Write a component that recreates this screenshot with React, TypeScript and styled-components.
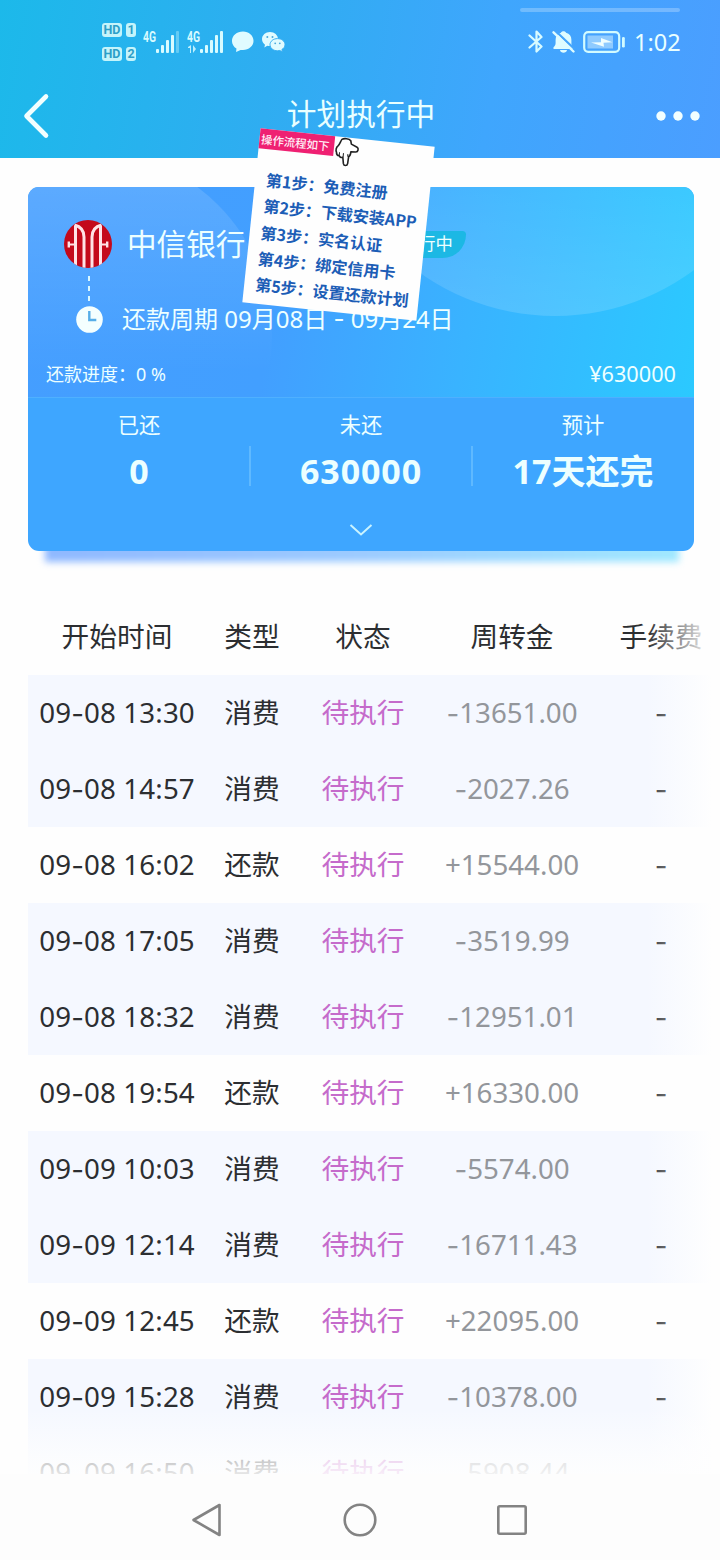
import React from 'react';
import styled, { createGlobalStyle } from 'styled-components';

const GlobalStyle = createGlobalStyle`
  * { box-sizing: border-box; }
  html, body { margin: 0; padding: 0; background: #fefefe; }
  body { font-family: "Noto Sans", "Noto Sans CJK SC", sans-serif; }
`;

const Screen = styled.div`
  position: relative;
  width: 720px;
  height: 1560px;
  overflow: hidden;
  display: flex;
  flex-direction: column;
  background: #fefefe;
`;

const TopArea = styled.header`
  height: 158px;
  flex: none;
  color: #e9ffff;
  background: linear-gradient(100deg, #1cb9ea 0%, #2fadf1 38%, #3fa6fd 68%, #4b9eff 100%);
`;

const StatusBar = styled.div`
  height: 74px;
  padding: 10px 40px 0 102px;
  display: flex;
  justify-content: space-between;
  align-items: center;
`;

const StatusGroup = styled.div<{ $gap: number }>`
  display: flex;
  align-items: center;
  gap: ${(p) => p.$gap}px;
  svg { display: block; }
`;

const SimStack = styled.div`
  display: flex;
  flex-direction: column;
  gap: 10px;
`;

const SimRow = styled.div`
  display: flex;
  gap: 4px;
`;

const SimTag = styled.span<{ $w: number }>`
  width: ${(p) => p.$w}px;
  height: 14px;
  border-radius: 3px;
  background: #c4f4fb;
  color: #2d9fc8;
  font: 700 12.5px/14px Roboto, sans-serif;
  text-align: center;
`;

const Clock = styled.span`
  width: 46px;
  font-size: 23.5px;
  line-height: 30px;
  white-space: nowrap;
`;

const Handle = styled.div`
  position: absolute;
  left: 520px;
  top: 8px;
  width: 160px;
  height: 4px;
  border-radius: 2px;
  background: rgba(255, 255, 255, 0.25);
`;

const TitleBar = styled.div`
  height: 84px;
  padding: 0 20px 0 22px;
  display: flex;
  align-items: center;
  justify-content: space-between;
  svg { display: block; }
`;

const Side = styled.div<{ $end?: boolean }>`
  width: 90px;
  display: flex;
  justify-content: ${(p) => (p.$end ? 'flex-end' : 'flex-start')};
`;

const Title = styled.h1`
  margin: -4px 0 0;
  font-size: 29.7px;
  font-weight: 400;
  line-height: 40px;
`;

const CardWrap = styled.section`
  position: relative;
  flex: none;
  margin: 29px 26px 0 28px;
  height: 364px;
  &::before {
    content: "";
    position: absolute;
    left: 17px;
    right: 15px;
    bottom: -11px;
    height: 30px;
    background: linear-gradient(90deg, #8fb8ff, #9ccbff 50%, #9fe8ff);
    filter: blur(3.5px);
  }
`;

const Card = styled.div`
  position: relative;
  height: 100%;
  border-radius: 11px;
  overflow: hidden;
  color: #edffff;
  background: #3ea6ff;
`;

const CardTop = styled.div`
  position: relative;
  height: 211px;
  background: linear-gradient(100deg, #459eff 0%, #429fff 38%, #39b3ff 66%, #2bc9ff 100%);
  border-bottom: 1px solid #4fb0ff;
`;

const Glow = styled.svg`
  position: absolute;
  inset: 0;
  display: block;
`;

const CardBody = styled.div`
  position: relative;
  padding: 31px 18px 0;
  height: 100%;
  display: flex;
  flex-direction: column;
`;

const BankRow = styled.div`
  display: flex;
  align-items: center;
  height: 52px;
  padding-left: 18px;
  svg { display: block; flex: none; }
`;

const BankName = styled.span`
  margin-left: 15px;
  width: 244px;
  font-size: 29.6px;
  line-height: 40px;
`;

const Badge = styled.span`
  margin-left: 20px;
  width: 75px;
  height: 27px;
  padding-left: 10px;
  border-radius: 4px 4px 26px 0;
  background: #1cb8e4;
  font-size: 17.3px;
  line-height: 26px;
  white-space: nowrap;
`;

const DashLink = styled.div`
  margin: 6px 0 0 42px;
  width: 2px;
  height: 28px;
  background: repeating-linear-gradient(180deg, #d9f7ff 0 5.5px, transparent 5.5px 10px);
`;

const CycleRow = styled.div`
  display: flex;
  align-items: center;
  height: 30px;
  padding-left: 30px;
  gap: 19px;
  font-size: 24px;
  line-height: 30px;
  white-space: pre;
  svg { display: block; flex: none; }
  span { position: relative; top: -0.5px; }
`;

const ProgressRow = styled.div`
  margin-top: 26px;
  height: 26px;
  display: flex;
  align-items: center;
  justify-content: space-between;
  font-size: 18px;
  white-space: pre;
`;

const Total = styled.span`
  font-size: 21.7px;
`;

const Stats = styled.div`
  display: flex;
`;

const Stat = styled.div`
  flex: 1;
  height: 110px;
  display: flex;
  flex-direction: column;
  align-items: center;
  position: relative;
  & + &::before {
    content: "";
    position: absolute;
    left: -1px;
    top: 48px;
    width: 2px;
    height: 40px;
    background: #5fb9ff;
  }
`;

const StatLabel = styled.span`
  margin-top: 12px;
  font-size: 21.3px;
  line-height: 30px;
`;

const StatValue = styled.strong<{ $track?: boolean }>`
  margin-top: 9px;
  font-size: 34px;
  line-height: 44px;
  font-weight: 700;
  letter-spacing: ${(p) => (p.$track ? '0.9px' : '0')};
`;

const Expand = styled.div`
  display: flex;
  justify-content: center;
  padding-top: 15px;
  svg { display: block; }
`;

const TableArea = styled.main`
  position: relative;
  flex: none;
  margin-top: 48px;
  height: 875px;
  overflow: hidden;
  &::before {
    content: "";
    position: absolute;
    z-index: 1;
    top: 0;
    right: 0;
    bottom: 0;
    width: 74px;
    background: linear-gradient(90deg, rgba(254, 254, 254, 0), rgba(254, 254, 254, 0.65) 45px, #fefefe 66px);
  }
  &::after {
    content: "";
    position: absolute;
    z-index: 1;
    left: 0;
    right: 0;
    bottom: 0;
    height: 66px;
    background: linear-gradient(180deg, rgba(254, 254, 254, 0), rgba(254, 254, 254, 0.72) 50px, rgba(254, 254, 254, 0.88) 66px);
  }
`;

const Row = styled.div<{ $shade?: boolean }>`
  width: 698px;
  height: 76px;
  margin-left: 28px;
  padding-bottom: 2px;
  display: grid;
  grid-template-columns: 178px 92px 130px 168px 130px;
  align-items: center;
  justify-items: center;
  font-size: 27.7px;
  line-height: 40px;
  color: #2c2e31;
  white-space: nowrap;
  background: ${(p) => (p.$shade ? '#f5f8ff' : 'transparent')};
`;

const TimeCell = styled.span`
  letter-spacing: 0.15px;
`;

const StateCell = styled.span`
  color: #c56bcb;
`;

const AmountCell = styled.span`
  color: #93969b;
`;

const Hyphen = styled.span`
  position: relative;
  top: 1px;
  font-family: Inter, sans-serif;
  line-height: 1;
`;

const NavBar = styled.nav`
  flex: 1;
  padding: 6px 2px 0 0;
  display: flex;
  align-items: center;
  justify-content: center;
  gap: 120px;
  background: #fdfdfd;
  svg { display: block; }
`;

const Sticker = styled.aside`
  position: absolute;
  z-index: 3;
  left: 251px;
  top: 137px;
  width: 175px;
  height: 175px;
  transform: rotate(6deg);
  background: #fefefe;
  color: #1c5db6;
`;

const StickerHead = styled.div`
  display: flex;
  height: 37px;
  svg { display: block; flex: none; margin: -2px 0 0 -1px; }
`;

const StickerTag = styled.div`
  width: 75px;
  height: 20px;
  padding-right: 3px;
  background: #ef2072;
  color: #ffeef6;
  font: 500 11.4px/21px "Noto Sans CJK SC", sans-serif;
  text-align: center;
  white-space: nowrap;
`;

const Step = styled.div`
  height: 26.3px;
  padding-left: 11px;
  font: 700 16.1px/26.3px "Noto Sans CJK SC", sans-serif;
  white-space: nowrap;
`;

const SignalIcon = ({ weak, data }: { weak?: boolean; data?: boolean }) => (
  <svg width="37" height="26" viewBox="0 0 37 26" fill="#d8fbff">
    <text x="0" y="12.500" fontFamily="Roboto" fontWeight="700" fontSize="14" textLength="13" lengthAdjust="spacingAndGlyphs">4G</text>
    {data && <path d="M1 18l3-2v8H3v-5H1zM6 16l3 4-3 4z" opacity=".85" />}
    <rect x="13" y="20" width="3" height="4" rx="1" />
    <rect x="18" y="16" width="3" height="8" rx="1" />
    <rect x="23" y="11" width="3" height="13" rx="1" />
    <rect x="28" y="6" width="3" height="18" rx="1" />
    <rect x="33" y="2" width="3" height="22" rx="1" opacity={weak ? 0.35 : 1} />
  </svg>
);

const ChatIcon = () => (
  <svg width="23" height="24" viewBox="0 0 24 24" preserveAspectRatio="none" fill="#e0fbff">
    <path d="M12.5 1.500C6.100 1.500 1 5.600 1 10.900c0 3.200 1.900 5.900 4.700 7.600L5.300 22l4.700-2.100c.8.100 1.600.2 2.500.2 6.100 0 11-4.100 11-9.300s-4.900-9.300-11-9.300z" />
  </svg>
);

const WechatIcon = () => (
  <svg width="25" height="22" viewBox="0 0 25 22">
    <path d="M9 1C4.500 1 1 4.200 1 8.100c0 2.300 1.200 4.300 3 5.600l-.7 2.700 3-1.600c.9.200 1.700.3 2.700.3 4.500 0 8-3.100 8-7S13.500 1 9 1z" fill="#e0fbff" />
    <path d="M16.500 7.600c-4.200 0-7.500 2.700-7.500 6.100s3.300 6.100 7.500 6.100c.8 0 1.600-.1 2.300-.3l2.700 1.400-.6-2.400c1.900-1.100 3.100-2.800 3.100-4.800 0-3.400-3.300-6.100-7.500-6.100z" fill="#e0fbff" stroke="#35aef3" strokeWidth="1" />
    <g fill="#47a9dd">
      <circle cx="6.300" cy="6" r="1" /><circle cx="11.500" cy="6" r="1" />
      <circle cx="14.200" cy="12.300" r=".9" /><circle cx="18.800" cy="12.300" r=".9" />
    </g>
  </svg>
);

const BluetoothIcon = () => (
  <svg width="16" height="26" viewBox="0 0 16 26" fill="none" stroke="#d8fbff" strokeWidth="2.200">
    <path d="M1.500 6.500l12 11-5 5V2.500l5 5.500-12 10.500" strokeLinejoin="round" strokeLinecap="round" />
  </svg>
);

const BellOffIcon = () => (
  <svg width="23" height="24" viewBox="0 0 23 24">
    <path d="M9 2.800C9.500.8 13.500.8 14 2.800c3.600.9 5.400 3.600 5.400 7v3.700c0 1.800.6 2.700 1.600 3.700v1.800H1.500v-1.800c1.500-1.300 2.100-2.500 2.100-4.300V9.700c0-3.200 1.900-5.900 5.400-6.900zM8 20h7c-.3 3.600-6.700 3.600-7 0z" fill="#dffcff" />
    <path d="M3 .5L23.500 20" stroke="#44a5fd" strokeWidth="2.200" />
    <path d="M1.500 2.300L21.500 21.500" stroke="#dffcff" strokeWidth="2.400" strokeLinecap="round" />
  </svg>
);

const BatteryIcon = () => (
  <svg width="43" height="24" viewBox="0 0 43 24">
    <rect x="1.200" y="2.200" width="35" height="19.600" rx="4" fill="none" stroke="#d2fbff" strokeWidth="2.200" />
    <rect x="4.500" y="5.500" width="25.500" height="13" fill="#8fcbff" />
    <path d="M8 12.500l10-.2V8l11.500 4.200-9 .5.500 4z" fill="#effeff" />
    <rect x="39" y="7" width="2.800" height="10.500" rx="1.300" fill="#d2fbff" />
  </svg>
);

const BankLogo = () => (
  <svg width="48" height="48" viewBox="0 0 48 48">
    <defs><clipPath id="logo"><circle cx="24" cy="24" r="24" /></clipPath></defs>
    <circle cx="24" cy="24" r="24" fill="#c4091b" />
    <g clipPath="url(#logo)" fill="none" stroke="#ffe2e6" strokeWidth="3">
      <path d="M11.500 49V5.500" />
      <path d="M10.500 5c6 1.500 9.500 5 9.500 12v32" />
      <path d="M36.500 49V5.500" />
      <path d="M37.500 5c-6 1.500-9.500 5-9.500 12v32" />
      <path d="M4.500 24.500H11M37 24.500h6.500" strokeWidth="2.200" />
      <path d="M4.800 21.500v6M43.200 21.500v6" strokeWidth="2.400" />
    </g>
  </svg>
);

const ClockIcon = () => (
  <svg width="27" height="27" viewBox="0 0 27 27">
    <circle cx="13.500" cy="13.500" r="13.300" fill="#f4ffff" />
    <path d="M13.300 5v9h7" fill="none" stroke="#57aee8" strokeWidth="2.400" />
  </svg>
);

const HandIcon = () => (
  <svg width="28" height="32" viewBox="0 0 28 32">
    <path
      d="M8 4.500C10 3 15 2.800 17 5l.9 3.200 6 2.500c2 .9 1.600 4.600-.7 4.900l-5 .3c.2 2.600-.5 4.200-1.700 5.100l-.3 7c-.2 2.700-3.500 2.900-4.200.5l-1.200-6.200c-1.700.7-3.200.2-3.700-1.200-1.800 0-3.100-1.300-3.100-3.200-1.300-2-.9-5.200 1-6.900C6.500 9.500 6.800 6.500 8 4.500z"
      fill="#fff" stroke="#222" strokeWidth="1.600" strokeLinejoin="round"
    />
    <path d="M7 17.500v3.500M11 18v4M15.500 18.500v2.500" fill="none" stroke="#222" strokeWidth="1" />
  </svg>
);

type Entry = [time: string, type: string, amount: string];

const entries: Entry[] = [
  ['09-08 13:30', '消费', '-13651.00'],
  ['09-08 14:57', '消费', '-2027.26'],
  ['09-08 16:02', '还款', '+15544.00'],
  ['09-08 17:05', '消费', '-3519.99'],
  ['09-08 18:32', '消费', '-12951.01'],
  ['09-08 19:54', '还款', '+16330.00'],
  ['09-09 10:03', '消费', '-5574.00'],
  ['09-09 12:14', '消费', '-16711.43'],
  ['09-09 12:45', '还款', '+22095.00'],
  ['09-09 15:28', '消费', '-10378.00'],
  ['09-09 16:50', '消费', '-5908.44'],
];

const steps = ['免费注册', '下载安装APP', '实名认证', '绑定信用卡', '设置还款计划'];

const stats = [
  { label: '已还', value: '0' },
  { label: '未还', value: '630000', track: true },
  { label: '预计', value: '17天还完' },
];

const Dashed = ({ text }: { text: string }) => (
  <>
    {text.split('-').map((part, i) => (
      <React.Fragment key={i}>
        {i > 0 && <Hyphen>-</Hyphen>}
        {part}
      </React.Fragment>
    ))}
  </>
);

export default function App() {
  return (
    <Screen>
      <GlobalStyle />
      <TopArea>
        <Handle />
        <StatusBar>
          <StatusGroup $gap={7}>
            <SimStack>
              {['1', '2'].map((n) => (
                <SimRow key={n}>
                  <SimTag $w={20}>HD</SimTag>
                  <SimTag $w={10}>{n}</SimTag>
                </SimRow>
              ))}
            </SimStack>
            <SignalIcon weak />
            <SignalIcon data />
            <ChatIcon />
            <WechatIcon />
          </StatusGroup>
          <StatusGroup $gap={8}>
            <BluetoothIcon />
            <BellOffIcon />
            <BatteryIcon />
            <Clock>1:02</Clock>
          </StatusGroup>
        </StatusBar>
        <TitleBar>
          <Side>
            <svg width="28" height="46" viewBox="0 0 28 46" fill="none" stroke="#f2ffff" strokeWidth="4.600" strokeLinecap="round" strokeLinejoin="round">
              <path d="M24 3.500L4.500 23 24 42.500" />
            </svg>
          </Side>
          <Title>计划执行中</Title>
          <Side $end>
            <svg width="44" height="12" viewBox="0 0 44 12" fill="#f2ffff">
              <circle cx="5" cy="6" r="4.700" /><circle cx="22" cy="6" r="4.700" /><circle cx="39" cy="6" r="4.700" />
            </svg>
          </Side>
        </TitleBar>
      </TopArea>

      <CardWrap>
        <Card>
          <CardTop>
            <Glow width="666" height="211" viewBox="0 0 666 211">
              <defs>
                <linearGradient id="glowLeft" x1="0" y1="0" x2="0" y2="1">
                  <stop offset="0" stopColor="#fff" stopOpacity=".15" />
                  <stop offset=".6" stopColor="#fff" stopOpacity="0" />
                </linearGradient>
                <linearGradient id="glowRight" x1="0" y1="0" x2="0" y2="1">
                  <stop offset=".45" stopColor="#fff" stopOpacity="0" />
                  <stop offset="1" stopColor="#fff" stopOpacity=".14" />
                </linearGradient>
              </defs>
              <circle cx="60" cy="148" r="184" fill="url(#glowLeft)" />
              <circle cx="527" cy="-104" r="233" fill="url(#glowRight)" />
            </Glow>
            <CardBody>
              <BankRow>
                <BankLogo />
                <BankName>中信银行</BankName>
                <Badge>执行中</Badge>
              </BankRow>
              <DashLink />
              <CycleRow>
                <ClockIcon />
                <span><Dashed text="还款周期 09月08日 - 09月24日" /></span>
              </CycleRow>
              <ProgressRow>
                <span>还款进度：0 %</span>
                <Total>¥630000</Total>
              </ProgressRow>
            </CardBody>
          </CardTop>
          <Stats>
            {stats.map((s) => (
              <Stat key={s.label}>
                <StatLabel>{s.label}</StatLabel>
                <StatValue $track={s.track}>{s.value}</StatValue>
              </Stat>
            ))}
          </Stats>
          <Expand>
            <svg width="24" height="14" viewBox="0 0 24 14" fill="none" stroke="#c9f3ff" strokeWidth="2">
              <path d="M1.500 2L12 11.500 22.500 2" />
            </svg>
          </Expand>
        </Card>
      </CardWrap>

      <TableArea>
        <Row>
          <span>开始时间</span>
          <span>类型</span>
          <span>状态</span>
          <span>周转金</span>
          <span>手续费</span>
        </Row>
        {entries.map(([time, type, amount]) => (
          <Row key={time} $shade={type === '消费'}>
            <TimeCell><Dashed text={time} /></TimeCell>
            <span>{type}</span>
            <StateCell>待执行</StateCell>
            <AmountCell><Dashed text={amount} /></AmountCell>
            <span><Hyphen>-</Hyphen></span>
          </Row>
        ))}
      </TableArea>

      <NavBar>
        <svg width="32" height="34" viewBox="0 0 32 34" fill="none" stroke="#838383" strokeWidth="2.600" strokeLinejoin="round">
          <path d="M2.500 17L28.500 2v30z" />
        </svg>
        <svg width="34" height="34" viewBox="0 0 34 34" fill="none" stroke="#838383" strokeWidth="2.600">
          <circle cx="17" cy="17" r="15.300" />
        </svg>
        <svg width="30" height="30" viewBox="0 0 30 30" fill="none" stroke="#838383" strokeWidth="2.600">
          <rect x="1.300" y="1.300" width="27.400" height="27.400" rx="1.500" />
        </svg>
      </NavBar>

      <Sticker>
        <StickerHead>
          <StickerTag>操作流程如下</StickerTag>
          <HandIcon />
        </StickerHead>
        {steps.map((s, i) => (
          <Step key={s}>{`第${i + 1}步：${s}`}</Step>
        ))}
      </Sticker>
    </Screen>
  );
}
